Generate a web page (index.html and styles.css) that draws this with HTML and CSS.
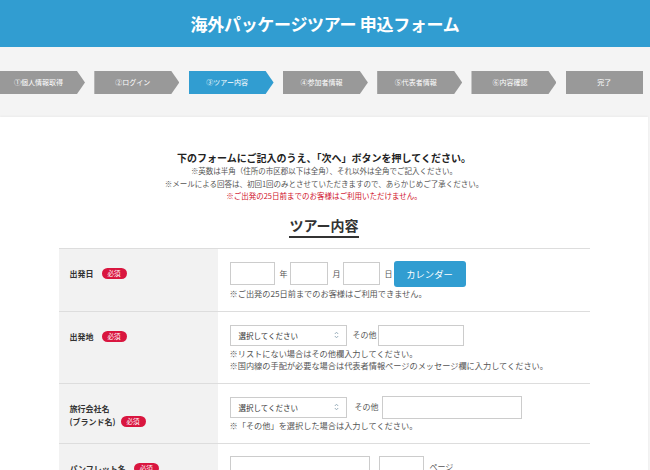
FILE: index.html
```html
<!DOCTYPE html>
<html lang="ja">
<head>
<meta charset="utf-8">
<title>海外パッケージツアー 申込フォーム</title>
<link rel="stylesheet" href="styles.css">
</head>
<body>
<header class="header"><h1 class="title">海外パッケージツアー 申込フォーム</h1></header>
<nav class="steps">
  <div class="step">①個人情報取得</div>
  <div class="step">②ログイン</div>
  <div class="step step-active">③ツアー内容</div>
  <div class="step">④参加者情報</div>
  <div class="step">⑤代表者情報</div>
  <div class="step">⑥内容確認</div>
  <div class="step step-last">完了</div>
</nav>
<main class="main">
  <div class="intro">
    <p class="intro-lead">下のフォームにご記入のうえ、「次へ」ボタンを押してください。</p>
    <p class="intro-note">※英数は半角（住所の市区郡以下は全角）、それ以外は全角でご記入ください。</p>
    <p class="intro-note">※メールによる回答は、初回1回のみとさせていただきますので、あらかじめご了承ください。</p>
    <p class="intro-note intro-red">※ご出発の25日前までのお客様はご利用いただけません。</p>
  </div>
  <div class="heading-wrap"><h2 class="heading">ツアー内容</h2></div>
  <div class="form">
    <div class="row">
      <div class="label"><span>出発日</span><span class="badge">必須</span></div>
      <div class="field">
        <div class="line">
          <input class="input w45" type="text">
          <span class="unit">年</span>
          <input class="input w38" type="text">
          <span class="unit">月</span>
          <input class="input w37" type="text">
          <span class="unit unit-last">日</span>
          <button class="btn" type="button">カレンダー</button>
        </div>
        <p class="note">※ご出発の25日前までのお客様はご利用できません。</p>
      </div>
    </div>
    <div class="row">
      <div class="label"><span>出発地</span><span class="badge">必須</span></div>
      <div class="field">
        <div class="line">
          <div class="select"><span>選択してください</span>
            <svg class="arrows" width="5" height="8" viewBox="0 0 5 8"><path d="M0.8 3 L2.5 1.2 L4.2 3 M0.8 5 L2.5 6.8 L4.2 5" fill="none" stroke="#8fa6b4" stroke-width="0.9"/></svg>
          </div>
          <span class="other">その他</span>
          <input class="input w86" type="text">
        </div>
        <p class="note">※リストにない場合はその他欄入力してください。</p>
        <p class="note">※国内線の手配が必要な場合は代表者情報ページのメッセージ欄に入力してください。</p>
      </div>
    </div>
    <div class="row">
      <div class="label label-two"><span>旅行会社名<br>(ブランド名)</span><span class="badge badge-low">必須</span></div>
      <div class="field">
        <div class="line">
          <div class="select select-short"><span>選択してください</span>
            <svg class="arrows" width="5" height="8" viewBox="0 0 5 8"><path d="M0.8 3 L2.5 1.2 L4.2 3 M0.8 5 L2.5 6.8 L4.2 5" fill="none" stroke="#8fa6b4" stroke-width="0.9"/></svg>
          </div>
          <span class="other other-wide">その他</span>
          <input class="input w140" type="text">
        </div>
        <p class="note">※「その他」を選択した場合は入力してください。</p>
      </div>
    </div>
    <div class="row">
      <div class="label"><span>パンフレット名</span><span class="badge">必須</span></div>
      <div class="field">
        <div class="line">
          <input class="input w140" type="text">
          <input class="input w45 gap9" type="text">
          <span class="other">ページ</span>
        </div>
      </div>
    </div>
  </div>
</main>
</body>
</html>
```

FILE: styles.css
```css
* { box-sizing: border-box; }
html, body { margin: 0; padding: 0; }
body {
  background: #f4f4f4;
  font-family: "Noto Sans CJK JP", "Noto Sans", sans-serif;
  color: #333;
  width: 650px;
  overflow: hidden;
}
p, h1, h2 { margin: 0; }

.header {
  background: #319dd1;
  height: 47px;
  display: flex;
  align-items: center;
  justify-content: center;
}
.title {
  color: #fff;
  font-size: 17px;
  font-weight: 700;
  line-height: 20px;
  letter-spacing: -0.3px;
}

.steps {
  display: flex;
  gap: 9.3px;
  padding: 24px 0 23px 0;
  background: #f4f4f4;
}
.step {
  width: 85px;
  height: 23px;
  padding-right: 8px;
  background: #999;
  color: #fff;
  font-size: 7px;
  line-height: 23px;
  text-align: center;
  flex: none;
  clip-path: polygon(0 0, 77px 0, 85px 50%, 77px 100%, 0 100%);
}
.step-active { background: #319dd1; }
.step-last { width: 77px; padding-right: 0; clip-path: none; }

.main {
  width: 648px;
  background: #fff;
  padding: 34px 0 40px;
  box-shadow: 0 -1px 2px rgba(0,0,0,0.04);
}
.intro { text-align: center; }
.intro-lead {
  font-size: 10px;
  font-weight: 700;
  line-height: 14px;
  color: #222;
}
.intro-note {
  font-size: 7.5px;
  line-height: 12.5px;
  color: #555;
}
.intro-red { color: #d0112b; }

.heading-wrap {
  display: flex;
  justify-content: center;
  margin-top: 13px;
}
.heading {
  font-size: 14px;
  font-weight: 700;
  line-height: 18px;
  padding-bottom: 2px;
  border-bottom: 2px solid #333;
  color: #333;
}

.form {
  width: 531px;
  margin: 10px auto 0;
  border-top: 1px solid #ddd;
}
.row {
  display: grid;
  grid-template-columns: 159px 1fr;
  border-bottom: 1px solid #ddd;
}
.label {
  background: #f2f2f2;
  padding: 18px 11px 12px;
  font-size: 8px;
  font-weight: 700;
  line-height: 13px;
  color: #333;
  display: flex;
  align-items: flex-start;
}
.label-two { align-items: flex-end; align-self: stretch; }
.label-two > span:first-child { line-height: 13px; }
.badge {
  display: inline-block;
  width: 25px;
  height: 11px;
  margin-left: 8px;
  margin-top: 1px;
  border-radius: 6px;
  background: #d9163f;
  color: #fff;
  font-size: 6.5px;
  font-weight: 400;
  line-height: 11px;
  text-align: center;
  flex: none;
}
.label-two { align-items: flex-start; }
.badge-low { margin-top: 14px; margin-left: 5px; }

.field {
  padding: 12px 12px 12px;
}
.line {
  display: flex;
  align-items: center;
  min-height: 23px;
}
.input {
  height: 23px;
  border: 1px solid #ccc;
  border-radius: 0;
  background: #fff;
  margin: 0;
  padding: 0;
  flex: none;
}
.w45 { width: 45px; }
.w38 { width: 38px; }
.w37 { width: 37px; }
.w86 { width: 86px; height: 21px; }
.w140 { width: 140px; }
.gap9 { margin-left: 9px; }
.unit {
  font-size: 8px;
  color: #555;
  margin: 0 2px 0 5px;
  line-height: 12px;
}
.unit-last { margin-right: 1px; }
.btn {
  width: 72px;
  height: 26px;
  border: none;
  border-radius: 3px;
  background: #319dd1;
  color: #fff;
  font-family: inherit;
  font-size: 9.3px;
  padding: 0;
  flex: none;
}
.select {
  width: 117px;
  height: 21px;
  border: 1px solid #ccc;
  display: flex;
  align-items: center;
  justify-content: space-between;
  padding: 0 7px 0 8px;
  font-size: 7.5px;
  color: #333;
  flex: none;
}
.select-short { height: 21px; }
.arrows { display: block; }
.other {
  font-size: 8px;
  color: #555;
  margin: 0 1px 0 6px;
  line-height: 12px;
}
.other-wide { margin: 0 3px 0 8px; }
.note {
  font-size: 8.2px;
  line-height: 12px;
  color: #555;
}
```
